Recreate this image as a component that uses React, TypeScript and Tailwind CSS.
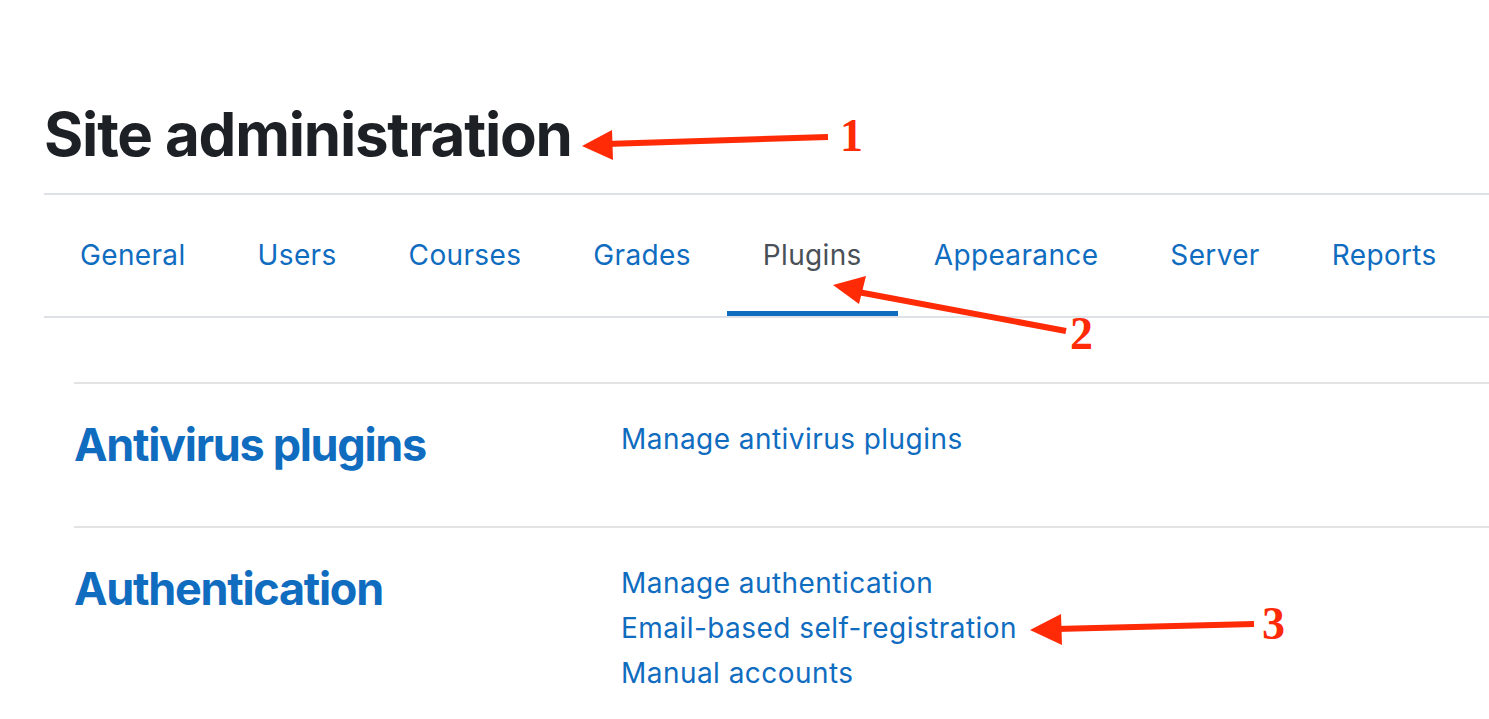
import { FC } from "react";

const tabs = ["General", "Users", "Courses", "Grades", "Plugins", "Appearance", "Server", "Reports"];

const sections = [
  { title: "Antivirus plugins", links: ["Manage antivirus plugins"] },
  {
    title: "Authentication",
    links: ["Manage authentication", "Email-based self-registration", "Manual accounts"],
  },
];

// red annotation arrows drawn over the screenshot
const Annotations: FC = () => (
  <svg className="pointer-events-none absolute left-0 top-0" width="1489" height="719">
    <g fill="#ff2a06" stroke="#ff2a06">
      <line x1="606" y1="144" x2="828" y2="137" strokeWidth="6" />
      <polygon points="582,146 612,130 613,160" stroke="none" />
      <line x1="858" y1="292" x2="1066" y2="331" strokeWidth="6" />
      <polygon points="833,285 866,276 859,304" stroke="none" />
      <line x1="1056" y1="629" x2="1254" y2="624" strokeWidth="6" />
      <polygon points="1030,630 1061,614 1062,645" stroke="none" />
    </g>
    <g fill="#ff2a06" fontFamily="'Liberation Serif', serif" fontWeight="700" fontSize="46">
      <text x="840" y="151">1</text>
      <text x="1070" y="349">2</text>
      <text x="1262" y="639">3</text>
    </g>
  </svg>
);

export default function App() {
  return (
    <div className="relative min-h-[719px] w-[1489px] overflow-hidden bg-white font-['Inter',sans-serif]">
      <div className="pl-[44px] pt-[98px]">
        <h1 className="text-[60px] font-bold leading-[72px] tracking-[-1.2px] text-[#1d2125]">
          Site administration
        </h1>
        <div className="mt-[23px] border-t-2 border-[#dee2e6]" />
        <nav className="flex border-b-2 border-[#dee2e6]">
          {tabs.map((t) => (
            <div
              key={t}
              className={
                t === "Plugins"
                  ? "flex h-[121px] items-center border-b-[5px] border-[#0f6cbf] px-[36px] pt-[4px] text-[28px] tracking-[0.35px] text-[#495057]"
                  : "flex h-[121px] items-center border-b-[5px] border-transparent px-[36px] pt-[4px] text-[28px] tracking-[0.35px] text-[#0f6cbf]"
              }
            >
              {t}
            </div>
          ))}
        </nav>
        <div className="ml-[30px] mt-[64px]">
          {sections.map((s) => (
            <div key={s.title} className="flex border-t-2 border-[#e3e3e3] pb-[54px] pt-[33px]">
              <h3 className="w-[547px] shrink-0 text-[45px] font-bold leading-[55px] tracking-[-1.3px] text-[#0f6cbf]">
                {s.title}
              </h3>
              <ul className="flex flex-col">
                {s.links.map((l) => (
                  <li key={l} className="text-[28px] leading-[45px] tracking-[0.45px] text-[#0f6cbf]">
                    {l}
                  </li>
                ))}
              </ul>
            </div>
          ))}
        </div>
      </div>
      <Annotations />
    </div>
  );
}
